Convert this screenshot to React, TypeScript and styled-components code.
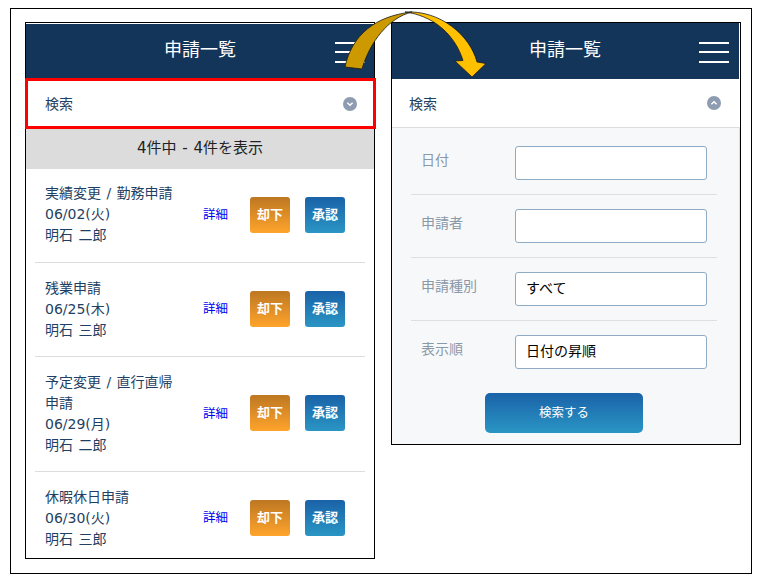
import { createGlobalStyle, styled } from 'styled-components';

const FONT = `"DejaVu Sans", "Noto Sans CJK JP", sans-serif`;

const requests = [
  { title: '実績変更 / 勤務申請', date: '06/02(火)', name: '明石 二郎' },
  { title: '残業申請', date: '06/25(木)', name: '明石 三郎' },
  { title: '予定変更 / 直行直帰申請', date: '06/29(月)', name: '明石 二郎' },
  { title: '休暇休日申請', date: '06/30(火)', name: '明石 三郎' },
];

const fields = [
  { label: '日付', value: '' },
  { label: '申請者', value: '' },
  { label: '申請種別', value: 'すべて' },
  { label: '表示順', value: '日付の昇順' },
];

const GlobalStyle = createGlobalStyle`
  html, body { margin: 0; padding: 0; background: #fff; }
  body { font-family: ${FONT}; }
`;

const Frame = styled.div`
  position: relative;
  box-sizing: border-box;
  width: 742px;
  height: 566px;
  margin: 8px 0 0 10px;
  padding: 13px 0 0 14px;
  border: 1px solid #000;
  display: flex;
  align-items: flex-start;
  gap: 16px;
`;

const Phone = styled.section<{ $height: number }>`
  box-sizing: border-box;
  width: 350px;
  height: ${(p) => p.$height}px;
  border: 1px solid #000;
  display: flex;
  flex-direction: column;
`;

const Header = styled.header<{ $open?: boolean }>`
  flex: none;
  height: ${(p) => (p.$open ? 56 : 54)}px;
  margin: ${(p) => (p.$open ? '0 1px 0 0' : '1px 0 0')};
  padding-right: ${(p) => (p.$open ? 10 : 9)}px;
  background: #14355a;
  display: flex;
  align-items: center;
  justify-content: flex-end;
  position: relative;
`;

const Title = styled.h1<{ $open?: boolean }>`
  position: absolute;
  left: 0;
  right: ${(p) => (p.$open ? 1 : 0)}px;
  margin: 0;
  padding-bottom: 6px;
  text-align: center;
  color: #fff;
  font-size: 18px;
  font-weight: 400;
`;

const Burger = styled.div`
  width: 30px;
  height: 21px;
  margin-top: 2px;
  display: flex;
  flex-direction: column;
  justify-content: space-between;
  & > span { display: block; height: 2px; background: #fff; }
`;

const SearchBar = styled.div<{ $highlight?: boolean }>`
  flex: none;
  box-sizing: border-box;
  display: flex;
  align-items: center;
  justify-content: space-between;
  color: #1f3f63;
  font-size: 14px;
  ${(p) =>
    p.$highlight
      ? `height: 51px; width: 351px; margin-left: -1px; padding: 0 16px 0 17px; border: 3px solid #f00;`
      : `height: 49px; padding: 0 19px 0 17px; border-bottom: 1px solid #ddd;`}
`;

const SearchLabel = styled.span<{ $raised?: boolean }>`
  margin-top: ${(p) => (p.$raised ? -2 : 0)}px;
`;

const Count = styled.div`
  flex: none;
  box-sizing: border-box;
  height: 40px;
  padding-bottom: 6px;
  background: #dcdcdc;
  color: #222;
  font-size: 15px;
  word-spacing: 1px;
  display: flex;
  align-items: center;
  justify-content: center;
`;

const Info = styled.div`
  width: 138px;
  margin: 2px 0 -2px;
  color: #1f3f63;
  font-size: 14px;
  line-height: 21px;
  word-spacing: 1px;
`;

const Row = styled.article`
  margin: 0 9px;
  padding: 13px 19px 17px 10px;
  border-bottom: 1px solid #ddd;
  display: flex;
  align-items: center;
  ${Count} + & ${Info} { margin: 1px 0 -1px; }
  &:last-child {
    padding-bottom: 8px;
    border-bottom: 0;
  }
`;

const Detail = styled.a`
  margin-left: 20px;
  color: #00e;
  font-size: 12.5px;
  white-space: nowrap;
`;

const ActionButton = styled.button<{ $tone: 'reject' | 'approve' }>`
  width: 40px;
  height: 36px;
  margin: 2px 0 0 ${(p) => (p.$tone === 'reject' ? 22 : 15)}px;
  padding: 0 0 3px;
  border: 0;
  border-radius: 3px;
  color: #fff;
  font-family: ${FONT};
  font-size: 13px;
  font-weight: 700;
  background: ${(p) =>
    p.$tone === 'reject'
      ? 'linear-gradient(#bd7722, #ffa42c)'
      : 'linear-gradient(#1a62a8, #2a96c4)'};
`;

const Form = styled.div`
  flex: 1;
  padding: 4px 22px 0 19px;
  background: #f7f8fa;
  border-right: 1px solid #ddd;
`;

const Field = styled.div`
  height: 62px;
  padding: 0 10px;
  border-bottom: 1px solid #dde0e3;
  display: flex;
  align-items: center;
  &:nth-child(4) { border-bottom-color: transparent; }
`;

const Label = styled.label`
  width: 94px;
  margin-top: -8px;
  color: #8a99a8;
  font-size: 14px;
`;

const Input = styled.div`
  box-sizing: border-box;
  width: 192px;
  height: 34px;
  padding: 0 10px;
  background: #fff;
  border: 1px solid #8fabc4;
  border-radius: 3px;
  color: #000;
  font-size: 14px;
  line-height: 30px;
`;

const SubmitRow = styled.div`
  margin-top: 9px;
  display: flex;
  justify-content: center;
`;

const SubmitButton = styled.button`
  width: 158px;
  height: 40px;
  padding: 0 0 4px;
  border: 0;
  border-radius: 5px;
  color: #fff;
  font-family: ${FONT};
  font-size: 12.5px;
  background: linear-gradient(#1a62a8, #2a96c4);
`;

const ArrowOverlay = styled.svg`
  position: absolute;
  left: -1px;
  top: -1px;
  width: 762px;
  height: 584px;
  margin: -8px 0 0 -10px;
  pointer-events: none;
`;

const Chevron = ({ up }: { up?: boolean }) => (
  <svg width="14" height="14" viewBox="0 0 14 14" aria-hidden="true">
    <circle cx="7" cy="7" r="7" fill="#8d9cb1" />
    <path
      d={up ? 'M4.4 8.2 7 5.8l2.6 2.4' : 'M4.4 5.8 7 8.2l2.6-2.4'}
      fill="none"
      stroke="#fff"
      strokeWidth="1.5"
    />
  </svg>
);

const PageHeader = ({ open }: { open?: boolean }) => (
  <Header $open={open}>
    <Title $open={open}>申請一覧</Title>
    <Burger>
      <span />
      <span />
      <span />
    </Burger>
  </Header>
);

export default function App() {
  return (
    <>
      <GlobalStyle />
      <Frame>
        <Phone $height={537}>
          <PageHeader />
          <SearchBar $highlight>
            <SearchLabel $raised>検索</SearchLabel>
            <Chevron />
          </SearchBar>
          <Count>4件中 - 4件を表示</Count>
          {requests.map((r) => (
            <Row key={r.title + r.date}>
              <Info>
                {r.title}
                <br />
                {r.date}
                <br />
                {r.name}
              </Info>
              <Detail>詳細</Detail>
              <ActionButton $tone="reject">却下</ActionButton>
              <ActionButton $tone="approve">承認</ActionButton>
            </Row>
          ))}
        </Phone>
        <Phone $height={423}>
          <PageHeader open />
          <SearchBar>
            <SearchLabel>検索</SearchLabel>
            <Chevron up />
          </SearchBar>
          <Form>
            {fields.map((f) => (
              <Field key={f.label}>
                <Label>{f.label}</Label>
                <Input>{f.value}</Input>
              </Field>
            ))}
            <SubmitRow>
              <SubmitButton>検索する</SubmitButton>
            </SubmitRow>
          </Form>
        </Phone>
        <ArrowOverlay viewBox="0 0 762 584" aria-hidden="true">
          <path
            d="M405 12 C440 10 470 35 477 62 L486 63.5 L472 77 L455 61 L463 60.5 C455 35 435 18 411 13 Z"
            fill="#ffc000"
            stroke="#1a1a1a"
            strokeWidth="0.8"
          />
          <path
            d="M345 67 C352 35 375 16 412 12 C388 18 370 42 362 69 Z"
            fill="#cc9900"
            stroke="#1a1a1a"
            strokeWidth="0.8"
          />
        </ArrowOverlay>
      </Frame>
    </>
  );
}
